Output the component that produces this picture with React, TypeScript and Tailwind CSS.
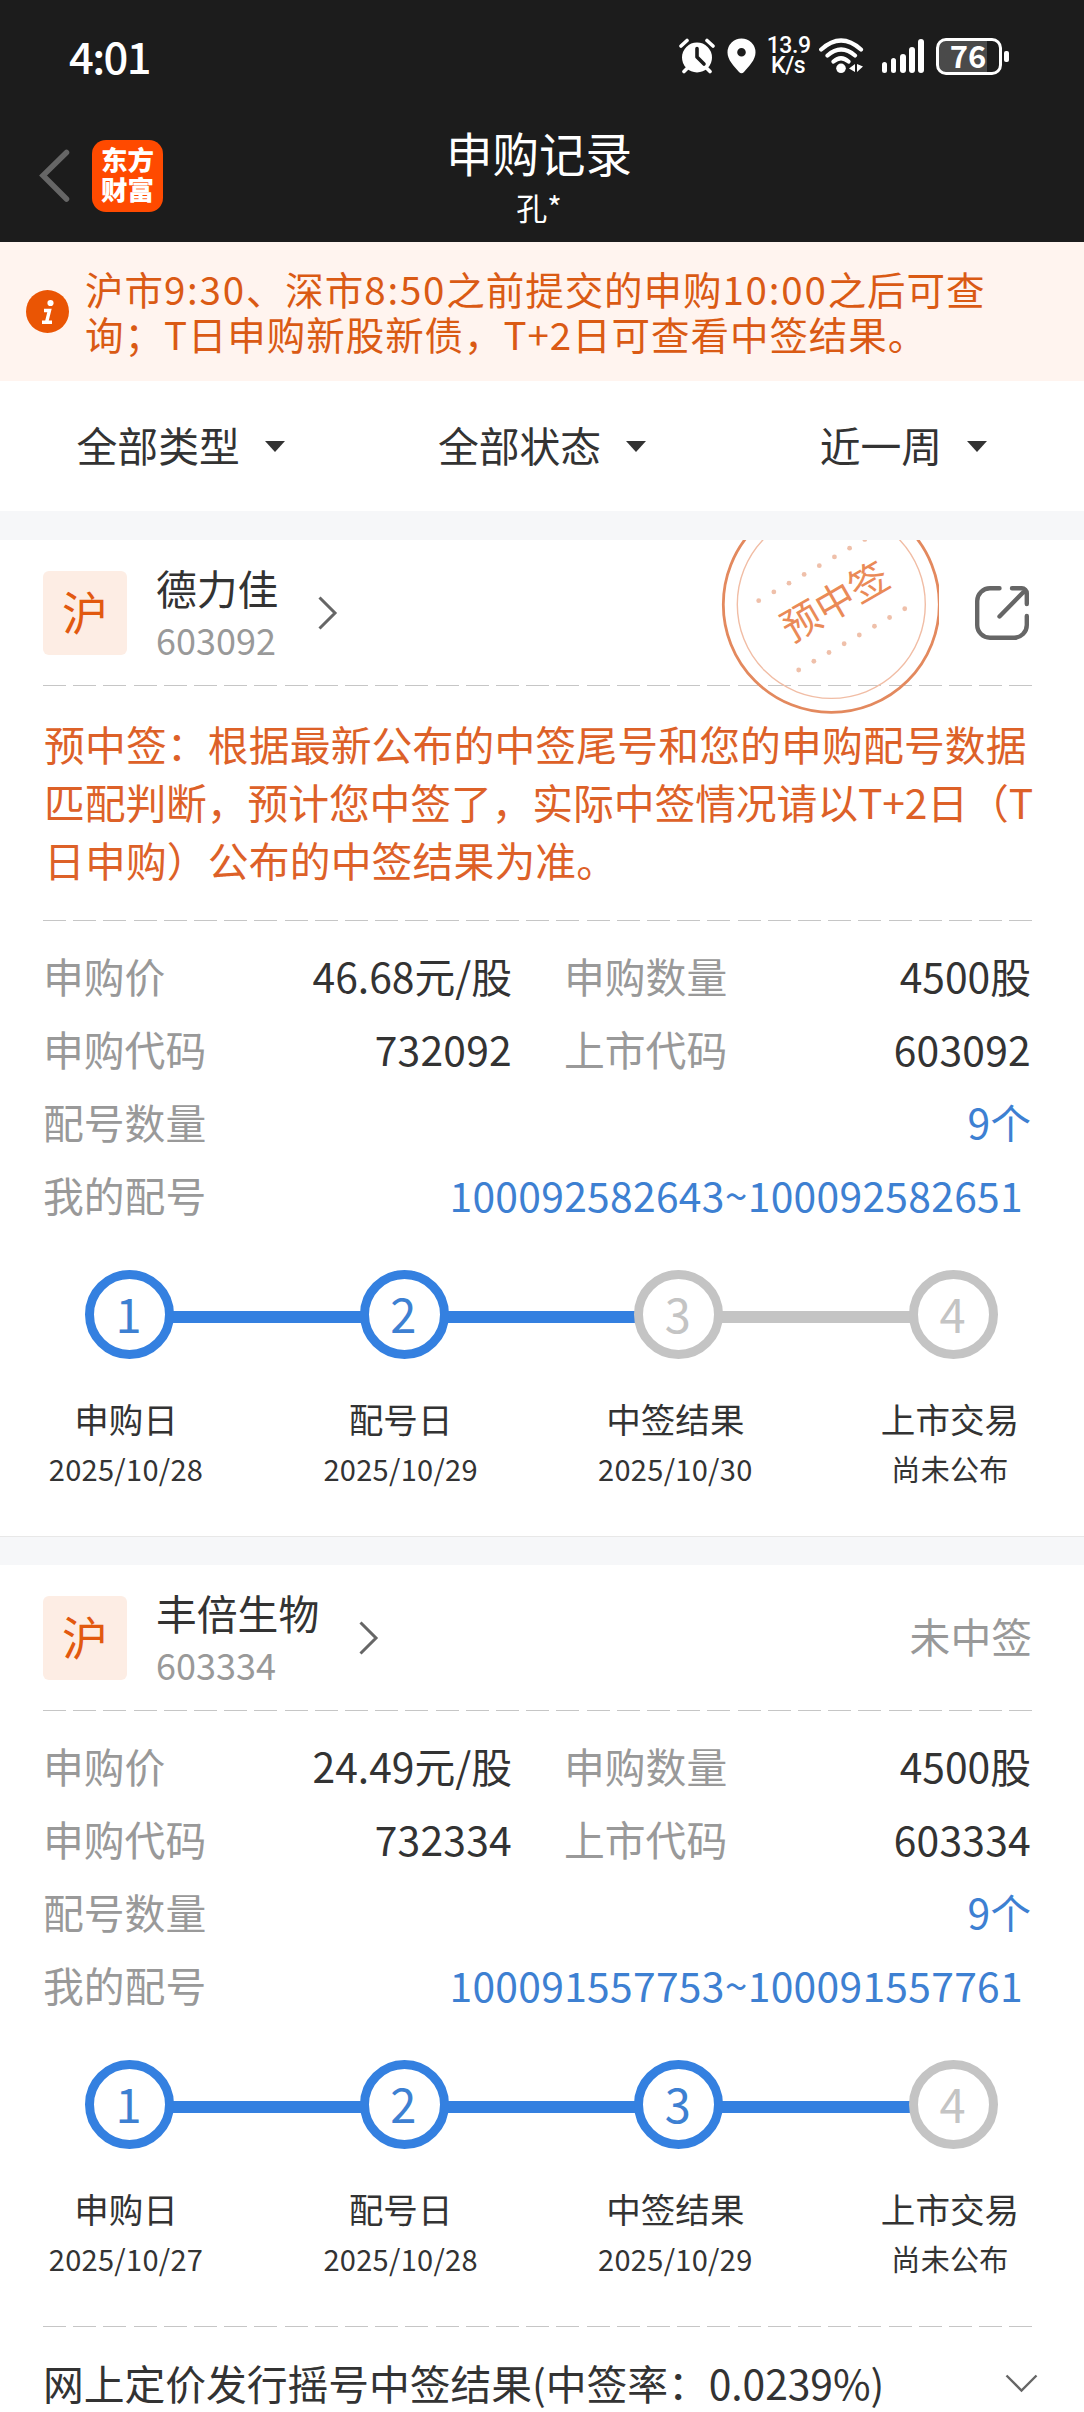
import type { ReactNode } from "react";
import clsx from "clsx";

type Step = { label: string; date: string };

type Rows = {
  price: string;
  amount: string;
  applyCode: string;
  listCode: string;
  count: string;
  range: string;
};

const StatusBar = () => {
  return (
    <div className="flex h-[112px] items-center pl-[69px] pr-[75px] text-white">
      <span className="text-[43.5px] leading-none font-medium tracking-[-1.6px]">
        4:01
      </span>
      <div className="ml-auto flex items-center">
        <svg width="36" height="36" viewBox="0 0 36 36" fill="none">
          <circle cx="18" cy="19.5" r="15" fill="white" />
          <path
            d="M2 8L8 2.5M34 8L28 2.5M5 33.5L9 29.5M31 33.5L27 29.5"
            stroke="white"
            strokeWidth="3.6"
            strokeLinecap="round"
          />
          <path
            d="M18 10.5V19L25 26"
            stroke="#1c1c1c"
            strokeWidth="3.6"
            strokeLinecap="round"
            strokeLinejoin="round"
          />
        </svg>
        <svg className="ml-[12px]" width="29" height="36" viewBox="0 0 29 36">
          <path
            d="M14.5 0.5A14 14 0 0 0 0.5 14.5C0.5 22 7 28 12 34Q14.5 36.5 17 34C22 28 28.5 22 28.5 14.5A14 14 0 0 0 14.5 0.5ZM14.5 10A4.3 4.3 0 1 1 14.5 18.6A4.3 4.3 0 1 1 14.5 10Z"
            fill="white"
            fillRule="evenodd"
          />
        </svg>
        <div className="ml-[11px] w-[43px] text-center font-['Roboto','Noto_Sans_CJK_SC',sans-serif] text-[23px] leading-[20.5px] font-medium tracking-[-0.4px]">
          <div>13.9</div>
          <div>K/s</div>
        </div>
        <svg
          className="ml-[9px]"
          width="45"
          height="36"
          viewBox="0 0 45 36"
          fill="none"
        >
          <path
            d="M2.2 11.5Q22 -6.5 42 11.5M8.5 17.5Q22 5.5 36 17.5M14.5 23.5Q22 17 29.5 23.5"
            stroke="white"
            strokeWidth="4.2"
            strokeLinecap="round"
          />
          <circle cx="22" cy="30.3" r="4.8" fill="white" />
          <path d="M36 26V34L30 30.5ZM38 26V34L44 28.5Z" fill="white" />
        </svg>
        <div className="ml-[18px] flex h-[34px] items-end gap-[3.6px]">
          <i className="h-[11px] w-[5.6px] rounded-full bg-white" />
          <i className="h-[15px] w-[5.6px] rounded-full bg-white" />
          <i className="h-[19px] w-[5.6px] rounded-full bg-white" />
          <i className="h-[26px] w-[5.6px] rounded-full bg-white" />
          <i className="h-[34px] w-[5.6px] rounded-full bg-white" />
        </div>
        <div className="ml-[12px] flex h-[37px] w-[66px] items-center justify-center rounded-[10px] border-[3px] border-white bg-linear-to-r from-[#4a4a4a] from-80% to-[#1c1c1c] to-80%">
          <span className="mt-[-3px] mr-[2px] text-[31px] leading-[31px] font-bold">
            76
          </span>
        </div>
        <i className="ml-[2px] h-[11px] w-[5px] rounded-[2px] bg-white" />
      </div>
    </div>
  );
};

const NavBar = () => {
  return (
    <div className="relative flex h-[130px] flex-col items-center pr-[6px] text-white">
      <div className="absolute top-[28px] left-[39px] flex items-center">
        <svg width="32" height="54" viewBox="0 0 32 54" fill="none">
          <path
            d="M27.5 3.5L4 26.5L27.5 50"
            stroke="#666"
            strokeWidth="5.5"
            strokeLinecap="round"
          />
        </svg>
        <div className="ml-[21px] h-[72px] w-[71px] rounded-[14px] bg-[#ff4a00] pt-[4px] text-center text-[26.5px] leading-[30px] font-black">
          东方
          <br />
          财富
        </div>
      </div>
      <div className="mt-[10px] text-[46.5px] leading-[60px]">申购记录</div>
      <div className="mt-[5px] text-[31px] leading-[40px]">孔*</div>
    </div>
  );
};

const Num = ({ children }: { children: ReactNode }) => (
  <span className="tracking-[1.8px]">{children}</span>
);

const Notice = () => {
  return (
    <div className="flex h-[139px] items-center bg-[#fff4ef] pl-[26px]">
      <svg className="shrink-0" width="43" height="43" viewBox="0 0 43 43">
        <circle cx="21.5" cy="21.5" r="21.5" fill="#ea5504" />
        <circle cx="24.5" cy="13" r="3.1" fill="white" />
        <path
          d="M18 20.5H23.5L20.6 32M16 32.3H26"
          fill="none"
          stroke="white"
          strokeWidth="3.4"
        />
      </svg>
      <p className="mt-[-2px] ml-[16px] text-[38.5px] leading-[44.3px] tracking-[0.95px] whitespace-nowrap text-[#da5a14]">
        沪市<Num>9:30</Num>、深市<Num>8:50</Num>之前提交的申购<Num>10:00</Num>
        之后可查
        <br />
        询；T日申购新股新债，T+2日可查看中签结果。
      </p>
    </div>
  );
};

const Filters = () => {
  return (
    <div className="grid h-[130px] grid-cols-3 bg-white">
      {["全部类型", "全部状态", "近一周"].map((name) => (
        <div key={name} className="flex items-center justify-center">
          <span className="mt-[-1px] text-[40.8px] leading-none">{name}</span>
          <svg className="ml-[25px]" width="20" height="11">
            <path d="M0 0H20L10 11Z" fill="#333" />
          </svg>
        </div>
      ))}
    </div>
  );
};

const Dashes = () => (
  <div className="mr-[51px] ml-[43px] h-px bg-[repeating-linear-gradient(90deg,#c6c6c6_0_23px,transparent_23px_30.2px)]" />
);

const CardHeader = ({
  name,
  code,
  children,
}: {
  name: string;
  code: string;
  children: ReactNode;
}) => {
  return (
    <div className="flex h-[145px] items-center pt-px pr-[53px] pl-[43px]">
      <div className="flex h-[84px] w-[84px] items-center justify-center rounded-[6px] bg-[#fdede4] text-[46px] leading-none text-[#e2590f]">
        <span className="mt-[-7px]">沪</span>
      </div>
      <div className="ml-[29px]">
        <div className="pt-px text-[40.8px] leading-[52px]">{name}</div>
        <div className="mt-[-1px] text-[36px] leading-[52px] text-[#999]">
          {code}
        </div>
      </div>
      <svg
        className="ml-[40px]"
        width="20"
        height="34"
        viewBox="0 0 20 34"
        fill="none"
      >
        <path d="M1.5 1.5L17 17L1.5 32.5" stroke="#666" strokeWidth="3" />
      </svg>
      <div className="ml-auto">{children}</div>
    </div>
  );
};

const ShareIcon = () => (
  <svg
    className="mr-[2px]"
    width="54"
    height="54"
    viewBox="0 0 54 54"
    fill="none"
  >
    <path
      d="M24.5 2.3H15A12.8 12.8 0 0 0 2.2 15V39A12.8 12.8 0 0 0 15 51.8H39A12.8 12.8 0 0 0 51.8 39V30M37 2.3H46.8A5 5 0 0 1 51.8 7.3V18M50 4.5L24.5 30.5"
      stroke="#666"
      strokeWidth="4.4"
      strokeLinecap="round"
    />
  </svg>
);

const Stamp = () => {
  const dots = [0, 1, 2, 3, 4, 5, 6, 7];
  return (
    <svg
      className="absolute top-0 left-[716px]"
      width="223"
      height="176"
      viewBox="716 540 223 176"
      fill="none"
    >
      <circle cx="831.3" cy="604.4" r="108" stroke="#e3895e" strokeWidth="2.8" />
      <circle cx="831.3" cy="604.4" r="94" stroke="#f1bda5" strokeWidth="1.4" />
      {dots.map((i) => (
        <g key={i} fill="#efc0aa">
          <circle cx={758.7 + i * 15.15} cy={600.7 - i * 8.75} r="2.4" />
          <circle cx={798.7 + i * 15.15} cy={670 - i * 8.75} r="2.4" />
        </g>
      ))}
      <text
        x="835"
        y="616"
        textAnchor="middle"
        fontSize="39"
        fill="#ea8a57"
        transform="rotate(-30 835 601.7)"
      >
        预中签
      </text>
    </svg>
  );
};

const Label = ({ children }: { children: ReactNode }) => (
  <span className="text-[#999]">{children}</span>
);

const InfoRows = ({ rows }: { rows: Rows }) => {
  return (
    <div className="mt-[18px] pr-[53px] pl-[43px] text-[40.8px] leading-[73px]">
      <div className="flex">
        <div className="flex w-[469px] justify-between">
          <Label>申购价</Label>
          <span>{rows.price}</span>
        </div>
        <div className="ml-[52px] flex flex-1 justify-between">
          <Label>申购数量</Label>
          <span>{rows.amount}</span>
        </div>
      </div>
      <div className="flex">
        <div className="flex w-[469px] justify-between">
          <Label>申购代码</Label>
          <span className="tracking-[0.25px]">{rows.applyCode}</span>
        </div>
        <div className="ml-[52px] flex flex-1 justify-between">
          <Label>上市代码</Label>
          <span className="tracking-[0.25px]">{rows.listCode}</span>
        </div>
      </div>
      <div className="flex justify-between">
        <Label>配号数量</Label>
        <span className="text-[#3d80d2]">{rows.count}</span>
      </div>
      <div className="flex justify-between pr-[8px]">
        <Label>我的配号</Label>
        <span className="tracking-[0.3px] text-[#3d80d2]">{rows.range}</span>
      </div>
    </div>
  );
};

const Steps = ({ steps, done }: { steps: Step[]; done: number }) => {
  return (
    <>
      <div className="mt-[39px] flex items-center pr-[86px] pl-[85px]">
        {steps.map((step, i) => (
          <div key={step.label} className={clsx("flex items-center", i > 0 && "flex-1")}>
            {i > 0 && (
              <div
                className={clsx(
                  "mt-[5px] -mr-[3px] -ml-[3px] h-[12px] flex-1",
                  i <= done ? "bg-[#3480e0]" : "bg-[#c4c4c4]"
                )}
              />
            )}
            <div
              className={clsx(
                "z-10 flex h-[89px] w-[89px] items-center justify-center rounded-full border-[9px] bg-white text-[47px] leading-none",
                i < done
                  ? "border-[#3480e0] text-[#3d80d2]"
                  : "border-[#c4c4c4] text-[#c4c4c4]"
              )}
            >
              <span className="mt-[-4px] mr-[2px]">{i + 1}</span>
            </div>
          </div>
        ))}
      </div>
      <div className="mt-[34px] mb-[43px] flex justify-between pr-[34px] pl-[26px] text-center">
        {steps.map((step) => (
          <div key={step.label} className="w-[200px]">
            <div className="text-[34.6px] leading-[50px]">{step.label}</div>
            <div className="text-[29px] leading-[50px] tracking-[0.3px]">
              {step.date}
            </div>
          </div>
        ))}
      </div>
    </>
  );
};

const App = () => {
  return (
    <div className="h-[2412px] w-[1084px] overflow-hidden bg-white font-['Noto_Sans_CJK_SC',sans-serif] text-[#333]">
      <header className="h-[242px] bg-[#1c1c1c]">
        <StatusBar />
        <NavBar />
      </header>
      <Notice />
      <Filters />
      <div className="h-[29px] bg-[#f6f7f9]" />

      <section className="relative flow-root h-[996px]">
        <Stamp />
        <CardHeader name="德力佳" code="603092">
          <ShareIcon />
        </CardHeader>
        <Dashes />
        <p className="mt-[29px] mb-[31px] ml-[44px] text-[40.8px] leading-[58px] tracking-[0.15px] whitespace-nowrap text-[#dd6128]">
          预中签：根据最新公布的中签尾号和您的申购配号数据
          <br />
          <span className="tracking-[-0.1px]">
            匹配判断，预计您中签了，实际中签情况请以T+2日（T
          </span>
          <br />
          日申购）公布的中签结果为准。
        </p>
        <Dashes />
        <InfoRows
          rows={{
            price: "46.68元/股",
            amount: "4500股",
            applyCode: "732092",
            listCode: "603092",
            count: "9个",
            range: "100092582643~100092582651",
          }}
        />
        <Steps
          done={2}
          steps={[
            { label: "申购日", date: "2025/10/28" },
            { label: "配号日", date: "2025/10/29" },
            { label: "中签结果", date: "2025/10/30" },
            { label: "上市交易", date: "尚未公布" },
          ]}
        />
      </section>
      <div className="h-[29px] border-t border-[#e8e8e8] bg-[#f6f7f9]" />

      <section>
        <CardHeader name="丰倍生物" code="603334">
          <div className="-mt-[4px] -mr-px text-[40.8px] text-[#999]">
            未中签
          </div>
        </CardHeader>
        <Dashes />
        <InfoRows
          rows={{
            price: "24.49元/股",
            amount: "4500股",
            applyCode: "732334",
            listCode: "603334",
            count: "9个",
            range: "100091557753~100091557761",
          }}
        />
        <Steps
          done={3}
          steps={[
            { label: "申购日", date: "2025/10/27" },
            { label: "配号日", date: "2025/10/28" },
            { label: "中签结果", date: "2025/10/29" },
            { label: "上市交易", date: "尚未公布" },
          ]}
        />
        <Dashes />
        <div className="flex h-[112px] items-center justify-between pr-[46px] pl-[43px] text-[40.8px]">
          <span className="tracking-[-0.05px]">
            网上定价发行摇号中签结果(中签率：0.0239%)
          </span>
          <svg width="33" height="19" viewBox="0 0 33 19" fill="none">
            <path d="M1.5 1.5L16.5 16.5L31.5 1.5" stroke="#666" strokeWidth="2.4" />
          </svg>
        </div>
      </section>
    </div>
  );
};

export default App;
